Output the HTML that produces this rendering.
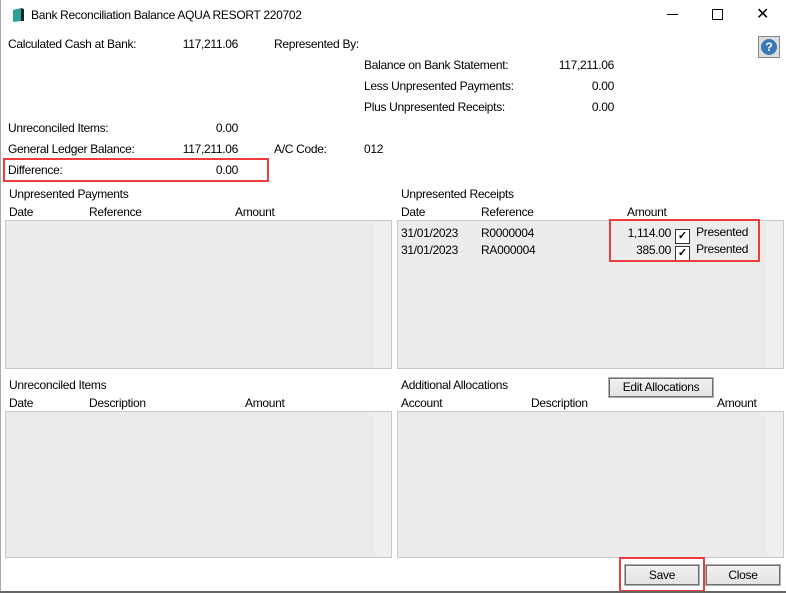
<!DOCTYPE html>
<html><head><style>
body{margin:0;width:786px;height:593px;background:#fff;font-family:"Liberation Sans",sans-serif;font-size:12px;letter-spacing:-0.3px;color:#000;position:relative;overflow:hidden}
.a{position:absolute;white-space:nowrap}
.r{text-align:right}
.p{position:absolute;border:1px solid #c9c9c9;background:#ececec}
.sb{position:absolute;right:0;top:0;bottom:0;width:17px;background:#efefef}
.btn{position:absolute;border:1px solid #adadad;background:linear-gradient(#f2f2f2,#e2e2e2);text-align:center;box-shadow:0 0 0 1px #707070 inset}
.red{position:absolute;border:2px solid #ee3b3b}
.cb{display:inline-block;width:13px;height:13px;border:1px solid #333;background:#fff;vertical-align:-3px;font-size:11px;font-weight:bold;line-height:13px;text-align:center;letter-spacing:0}
</style></head><body>
<div class="a" style="left:0;top:0;width:1px;height:593px;background:#aaa"></div>
<svg class="a" style="left:11px;top:7px" width="14" height="16"><path d="M2 3 L10 1 L10 14 L2 15Z" fill="#2aa198"/><path d="M10 1 L13 2 L13 14 L10 14Z" fill="#222"/></svg>
<div class="a" style="left:31px;top:8px">Bank Reconciliation Balance AQUA RESORT 220702</div>
<div class="a" style="left:667px;top:14px;width:11px;height:1px;background:#000"></div>
<div class="a" style="left:712px;top:9px;width:9px;height:9px;border:1px solid #000"></div>
<div class="a" style="left:756px;top:4px;font-size:16px">✕</div>
<div class="a" style="left:758px;top:36px;width:20px;height:20px;border:1px solid #888;background:#ddd"><div style="margin:2px;width:16px;height:16px;border-radius:50%;background:#3a78b8;color:#fff;font-weight:bold;text-align:center;line-height:16px;font-size:12px">?</div></div>

<div class="a" style="left:8px;top:37px">Calculated Cash at Bank:</div>
<div class="a r" style="left:140px;top:37px;width:98px">117,211.06</div>
<div class="a" style="left:274px;top:37px">Represented By:</div>
<div class="a" style="left:364px;top:58px">Balance on Bank Statement:</div>
<div class="a r" style="left:520px;top:58px;width:94px">117,211.06</div>
<div class="a" style="left:364px;top:79px">Less Unpresented Payments:</div>
<div class="a r" style="left:520px;top:79px;width:94px">0.00</div>
<div class="a" style="left:364px;top:100px">Plus Unpresented Receipts:</div>
<div class="a r" style="left:520px;top:100px;width:94px">0.00</div>
<div class="a" style="left:8px;top:121px">Unreconciled Items:</div>
<div class="a r" style="left:140px;top:121px;width:98px">0.00</div>
<div class="a" style="left:8px;top:142px">General Ledger Balance:</div>
<div class="a r" style="left:140px;top:142px;width:98px">117,211.06</div>
<div class="a" style="left:274px;top:142px">A/C Code:</div>
<div class="a" style="left:364px;top:142px">012</div>
<div class="a" style="left:8px;top:163px">Difference:</div>
<div class="a r" style="left:140px;top:163px;width:98px">0.00</div>
<div class="red" style="left:3px;top:158px;width:262px;height:20px"></div>

<div class="a" style="left:9px;top:187px">Unpresented Payments</div>
<div class="a" style="left:9px;top:205px">Date</div><div class="a" style="left:89px;top:205px">Reference</div><div class="a" style="left:235px;top:205px">Amount</div>
<div class="p" style="left:5px;top:220px;width:385px;height:147px"><div class="sb"></div></div>

<div class="a" style="left:401px;top:187px">Unpresented Receipts</div>
<div class="a" style="left:401px;top:205px">Date</div><div class="a" style="left:481px;top:205px">Reference</div><div class="a" style="left:627px;top:205px">Amount</div>
<div class="p" style="left:397px;top:220px;width:385px;height:147px"><div class="sb"></div></div>
<div class="a" style="left:401px;top:226px">31/01/2023</div><div class="a" style="left:481px;top:226px">R0000004</div>
<div class="a r" style="left:600px;top:226px;width:71px">1,114.00</div>
<div class="a" style="left:675px;top:225px"><span class="cb">✓</span>&nbsp; Presented</div>
<div class="a" style="left:401px;top:243px">31/01/2023</div><div class="a" style="left:481px;top:243px">RA000004</div>
<div class="a r" style="left:600px;top:243px;width:71px">385.00</div>
<div class="a" style="left:675px;top:242px"><span class="cb">✓</span>&nbsp; Presented</div>
<div class="red" style="left:609px;top:219px;width:147px;height:39px"></div>

<div class="a" style="left:9px;top:378px">Unreconciled Items</div>
<div class="a" style="left:9px;top:396px">Date</div><div class="a" style="left:89px;top:396px">Description</div><div class="a" style="left:245px;top:396px">Amount</div>
<div class="p" style="left:5px;top:411px;width:385px;height:145px"><div class="sb"></div></div>

<div class="a" style="left:401px;top:378px">Additional Allocations</div>
<div class="btn" style="left:608px;top:377px;width:104px;height:19px;line-height:19px">Edit Allocations</div>
<div class="a" style="left:401px;top:396px">Account</div><div class="a" style="left:531px;top:396px">Description</div><div class="a" style="left:717px;top:396px">Amount</div>
<div class="p" style="left:397px;top:411px;width:385px;height:145px"><div class="sb"></div></div>

<div class="btn" style="left:624px;top:564px;width:74px;height:20px;line-height:20px">Save</div>
<div class="btn" style="left:705px;top:564px;width:74px;height:20px;line-height:20px">Close</div>
<div class="red" style="left:619px;top:557px;width:82px;height:31px"></div>
<div class="a" style="left:0;top:591px;width:786px;height:2px;background:#666"></div>
</body></html>
